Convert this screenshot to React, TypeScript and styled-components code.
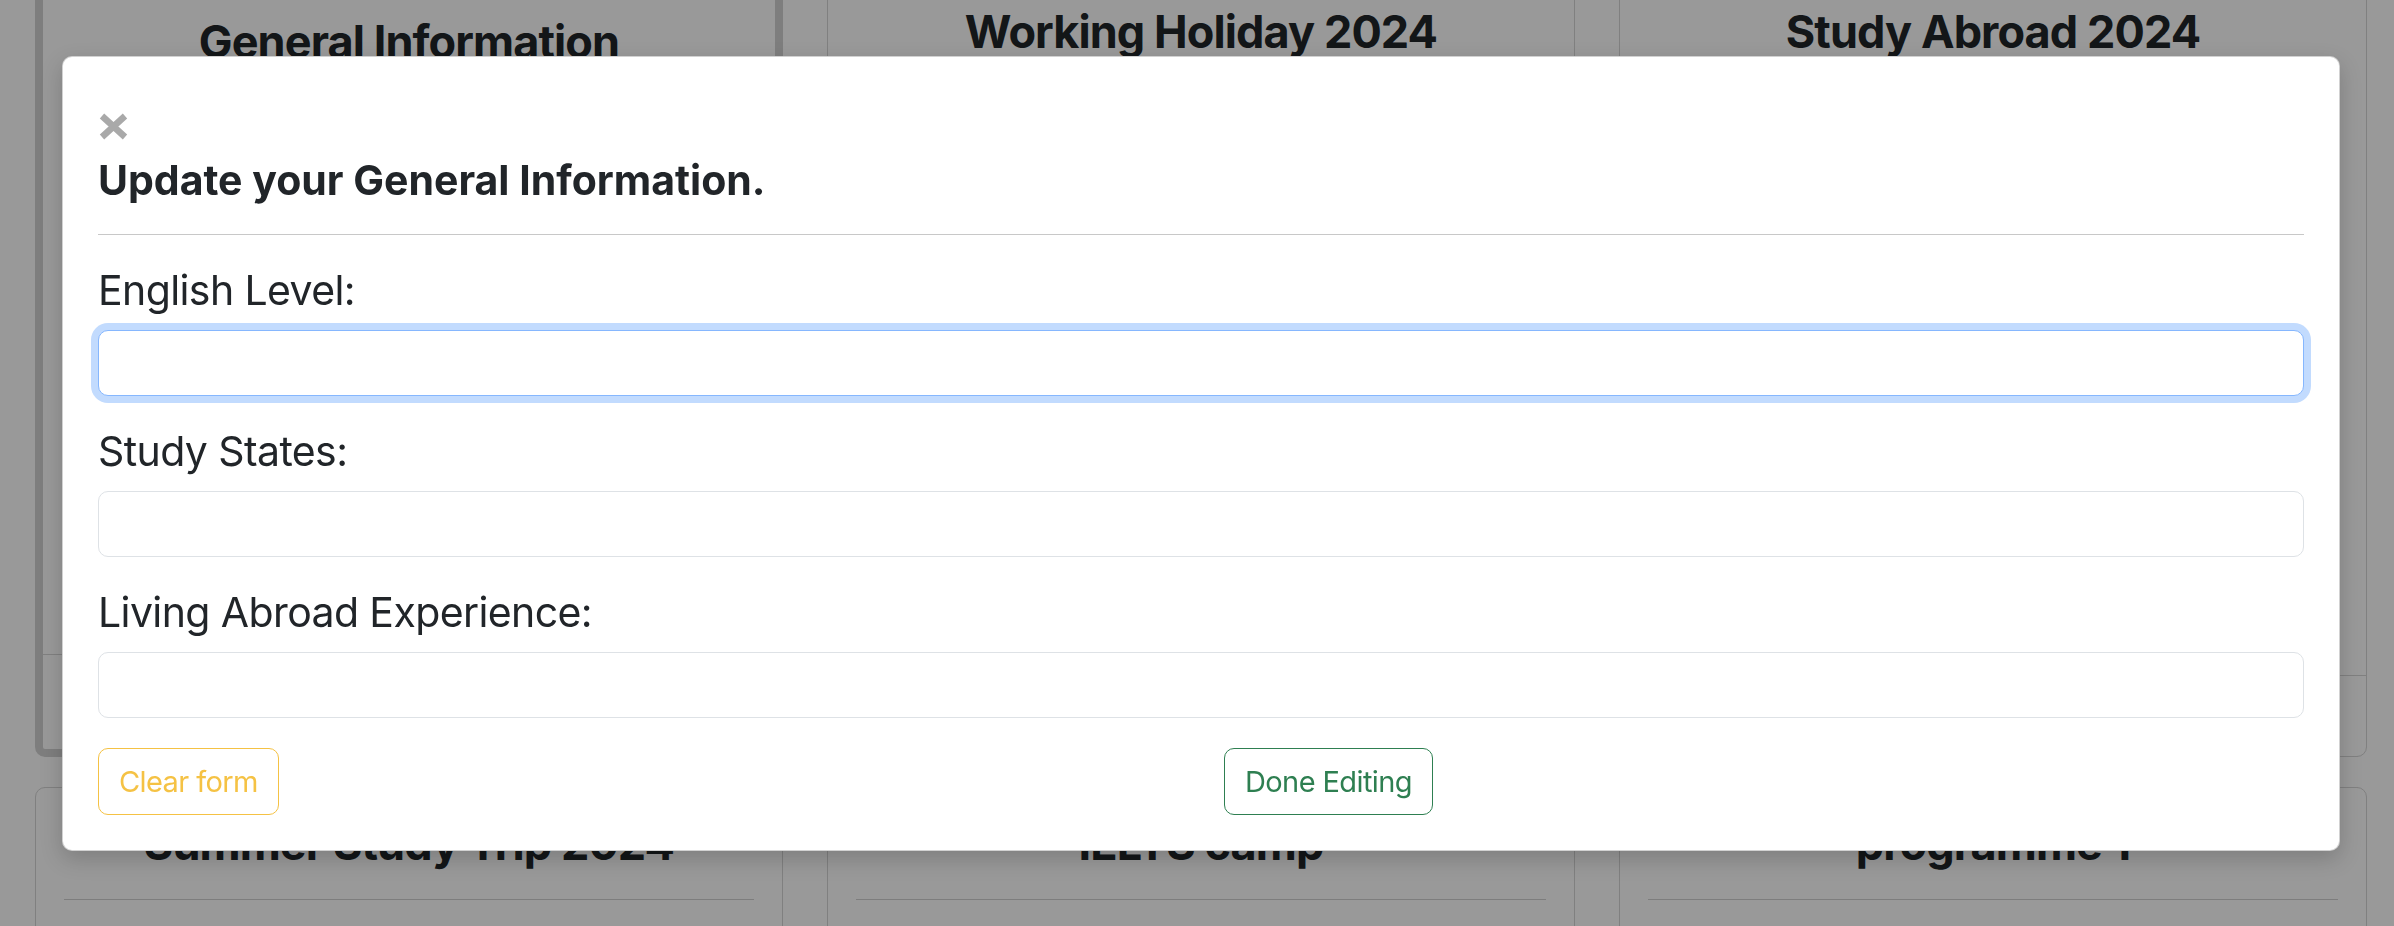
import React from "react";
import styled, { createGlobalStyle } from "styled-components";

const GlobalStyle = createGlobalStyle`
  html, body {
    margin: 0;
    padding: 0;
    overflow: hidden;
    background: #ffffff;
    font-family: Inter, "Noto Sans", "Liberation Sans", sans-serif;
    color: #212529;
  }
  * { box-sizing: border-box; }
`;

const Page = styled.main`
  display: grid;
  grid-template-columns: repeat(3, 748px);
  column-gap: 44px;
  row-gap: 30px;
  padding-left: 35px;
  margin-top: -25px;
`;

const Card = styled.section<{ $selected?: boolean }>`
  height: 782px;
  display: flex;
  flex-direction: column;
  background: #ffffff;
  border: ${(p) => (p.$selected ? "8px solid #d3d3d3" : "1px solid #d5d5d5")};
  border-radius: 10px;
`;

const CardHeader = styled.div<{ $shift?: number }>`
  padding: ${(p) => 29 + (p.$shift || 0)}px 28px 0 28px;
`;

const CardTitle = styled.h2`
  margin: 0;
  font-size: 45px;
  line-height: 54px;
  font-weight: 700;
  text-align: center;
  letter-spacing: -0.9px;
  color: #212529;
`;

const CardRule = styled.hr`
  margin: 28px 0 0 0;
  border: 0;
  border-top: 1px solid #d0d0d0;
`;

const CardFooter = styled.div<{ $h: number }>`
  margin-top: auto;
  height: ${(p) => p.$h}px;
  border-top: 1px solid #d5d5d5;
`;

const Backdrop = styled.div`
  position: fixed;
  inset: 0;
  background: rgba(0, 0, 0, 0.4);
`;

const Modal = styled.div`
  position: fixed;
  left: 62px;
  top: 56px;
  width: 2278px;
  background: #ffffff;
  border: 1px solid rgba(0, 0, 0, 0.18);
  border-radius: 10px;
  box-shadow: 0 8px 22px rgba(0, 0, 0, 0.18);
  padding: 56px 35px 35px 35px;
  display: flex;
  flex-direction: column;
`;

const CloseButton = styled.button`
  align-self: flex-start;
  margin-left: 1px;
  width: 29px;
  height: 27px;
  padding: 0;
  border: 0;
  background: transparent;
  display: flex;
  cursor: pointer;
`;

const ModalTitle = styled.h5`
  margin: 15px 0 0 0;
  font-size: 41px;
  line-height: 50px;
  font-weight: 700;
  letter-spacing: 0;
  color: #212529;
`;

const Rule = styled.hr`
  margin: 29px 0 0 0;
  border: 0;
  border-top: 1px solid #c8c8c8;
`;

const Field = styled.div`
  display: flex;
  flex-direction: column;
  margin-top: 30px;
`;

const Label = styled.label`
  font-size: 41px;
  line-height: 50px;
  font-weight: 400;
  letter-spacing: -0.6px;
  color: #212529;
`;

const Input = styled.input<{ $focused?: boolean }>`
  margin-top: 15px;
  height: 66px;
  width: 100%;
  border: 1px solid ${(p) => (p.$focused ? "#86b7fe" : "#dee2e6")};
  border-radius: 10px;
  background: #ffffff;
  box-shadow: ${(p) => (p.$focused ? "0 0 0 7px rgba(13, 110, 253, 0.25)" : "none")};
  outline: none;
  font-family: inherit;
  font-size: 29px;
  padding: 0 18px;
`;

const Footer = styled.div`
  margin-top: 30px;
  display: grid;
  grid-template-columns: 1fr 1fr;
  column-gap: 46px;
  align-items: start;
`;

const OutlineButton = styled.button<{ $color: string }>`
  justify-self: start;
  height: 67px;
  padding: 0 20px;
  border: 1px solid ${(p) => p.$color};
  border-radius: 10px;
  background: transparent;
  color: ${(p) => p.$color};
  font-family: inherit;
  font-size: 29px;
  line-height: 65px;
  letter-spacing: -0.6px;
  cursor: pointer;
`;

const cards = [
  { title: "General Information", selected: true },
  { title: "Working Holiday 2024" },
  { title: "Study Abroad 2024" },
  { title: "Summer Study Trip 2024" },
  { title: "IELTS camp" },
  { title: "programme 1" },
];

const fields = [
  { label: "English Level:", focused: true },
  { label: "Study States:" },
  { label: "Living Abroad Experience:" },
];

export default function App() {
  return (
    <>
      <GlobalStyle />
      <Page>
        {cards.map((c) => (
          <Card key={c.title} $selected={c.selected}>
            <CardHeader $shift={c.selected ? 3 : 0}>
              <CardTitle>{c.title}</CardTitle>
              <CardRule />
            </CardHeader>
            <CardFooter $h={c.selected ? 95 : 81} />
          </Card>
        ))}
      </Page>
      <Backdrop />
      <Modal role="dialog">
        <CloseButton aria-label="Close">
          <svg width="29" height="27" viewBox="0 0 29 27">
            <path d="M3 3 L26 24 M26 3 L3 24" stroke="#a9a9a9" strokeWidth="6.5" strokeLinecap="butt" fill="none" />
          </svg>
        </CloseButton>
        <ModalTitle>Update your General Information.</ModalTitle>
        <Rule />
        {fields.map((f) => (
          <Field key={f.label}>
            <Label>{f.label}</Label>
            <Input $focused={f.focused} />
          </Field>
        ))}
        <Footer>
          <OutlineButton $color="#f5c244">Clear form</OutlineButton>
          <OutlineButton $color="#2e7f51">Done Editing</OutlineButton>
        </Footer>
      </Modal>
    </>
  );
}
